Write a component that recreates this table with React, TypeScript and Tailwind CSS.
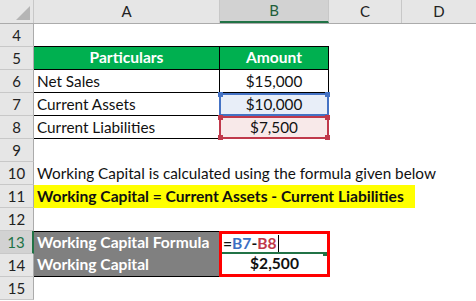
import React from 'react';

const font = { fontFamily: 'Lato, "Open Sans", sans-serif' };

function RowNum({ n, active }: { n: number; active?: boolean }) {
  return (
    <div
      className={
        active
          ? 'w-[34px] h-full shrink-0 flex items-center justify-center bg-[#d2d2d2] border-b border-[#c8c8c8] border-r-2 border-r-[#217346] text-[#217346] text-[15px]'
          : 'w-[34px] h-full shrink-0 flex items-center justify-center bg-[#e6e6e6] border-b border-r border-[#c8c8c8] border-r-[#ababab] text-[#222] text-[15px]'
      }
    >
      {n}
    </div>
  );
}

function Row({ n, active, children }: { n: number; active?: boolean; children?: React.ReactNode }) {
  return (
    <div className="flex h-[23px] relative">
      <RowNum n={n} active={active} />
      {children}
    </div>
  );
}

function Corner({ className }: { className: string }) {
  return <span className={'absolute w-[5px] h-[5px] ' + className} />;
}

export default function App() {
  return (
    <div className="w-[476px] h-[301px] bg-white overflow-hidden text-[#111] text-[15.3px]" style={font}>
      {/* column headers */}
      <div className="flex h-[24px] bg-[#e6e6e6] border-b border-[#ababab] text-[15px] text-[#222]">
        <div className="w-[34px] shrink-0 border-r border-[#c8c8c8] relative">
          <svg className="absolute right-[3px] bottom-[3px]" width="14" height="14" viewBox="0 0 14 14">
            <polygon points="14,0 14,14 0,14" fill="#b5b5b5" />
          </svg>
        </div>
        <div className="w-[186px] shrink-0 flex items-center justify-center border-r border-[#c8c8c8]">A</div>
        <div className="w-[109px] shrink-0 flex items-center justify-center bg-[#d2d2d2] border-b-2 border-[#217346] border-r border-r-[#c8c8c8] text-[#1e5e3a]">B</div>
        <div className="w-[73px] shrink-0 flex items-center justify-center border-r border-[#c8c8c8]">C</div>
        <div className="flex-1 flex items-center justify-center">D</div>
      </div>

      <Row n={4}>
        <div className="w-[186px] border-b border-black" />
        <div className="w-[109px] border-b border-black" />
      </Row>
      <Row n={5}>
        <div className="w-[186px] flex items-center justify-center bg-[#00b050] text-white font-bold text-[15.6px] border-b border-r border-black">Particulars</div>
        <div className="w-[109px] flex items-center justify-center bg-[#00b050] text-white font-bold text-[15.6px] border-b border-r border-black">Amount</div>
      </Row>
      <Row n={6}>
        <div className="w-[186px] flex items-center pl-[3px] border-b border-r border-black">Net Sales</div>
        <div className="w-[109px] flex items-center justify-center border-b border-r border-black">$15,000</div>
      </Row>
      <Row n={7}>
        <div className="w-[185px] flex items-center pl-[3px] border-b border-black">Current Assets</div>
        <div className="w-[110px] flex items-center justify-center relative bg-[#e8eef8] border-2 border-[#4472c4]">
          $10,000
          <Corner className="bg-[#4472c4] -left-[3px] -top-[3px]" />
          <Corner className="bg-[#4472c4] -right-[3px] -top-[3px]" />
        </div>
      </Row>
      <Row n={8}>
        <div className="w-[185px] flex items-center pl-[3px] border-b border-black">Current Liabilities</div>
        <div className="w-[110px] flex items-center justify-center relative bg-[#f8e9e9] border-2 border-[#c0394b]">
          $7,500
          <Corner className="bg-[#c0394b] -left-[3px] -top-[3px]" />
          <Corner className="bg-[#c0394b] -right-[3px] -top-[3px]" />
          <Corner className="bg-[#c0394b] -left-[3px] -bottom-[3px]" />
          <Corner className="bg-[#c0394b] -right-[3px] -bottom-[3px]" />
        </div>
      </Row>
      <Row n={9} />
      <Row n={10}>
        <div className="flex items-center pl-[3px] whitespace-nowrap">Working Capital is calculated using the formula given below</div>
      </Row>
      <Row n={11}>
        <div className="w-[381px] flex items-center pl-[3px] bg-[#ffff00] font-bold text-[15.6px] whitespace-nowrap">Working Capital = Current Assets - Current Liabilities</div>
      </Row>
      <Row n={12} />
      <Row n={13} active>
        <div className="w-[185px] flex items-center pl-[3px] bg-[#808080] text-white font-bold text-[15.6px] whitespace-nowrap border-t border-black">Working Capital Formula</div>
        <div className="w-[111px] flex items-center relative border-t-[3px] border-x-[3px] border-[#ff0000]">
          <span className="font-bold text-[15.6px] pl-[1px]">
            <span>=</span>
            <span className="text-[#3c6fc4]">B7</span>
            <span>-</span>
            <span className="text-[#c0394b]">B8</span>
          </span>
          <span className="w-px h-[18px] bg-black ml-[1px]" />
          <span className="absolute left-0 right-[1px] bottom-0 h-[2px] bg-[#217346]" />
          <span className="absolute right-0 -bottom-[2px] w-[4px] h-[4px] bg-[#217346]" />
        </div>
      </Row>
      <Row n={14}>
        <div className="w-[185px] flex items-center pl-[3px] bg-[#808080] text-white font-bold text-[15.6px] border-b border-black">Working Capital</div>
        <div className="w-[111px] flex items-center justify-center font-bold text-[15.6px] border-b-[3px] border-x-[3px] border-[#ff0000]">$2,500</div>
      </Row>
      <Row n={15} />
    </div>
  );
}
